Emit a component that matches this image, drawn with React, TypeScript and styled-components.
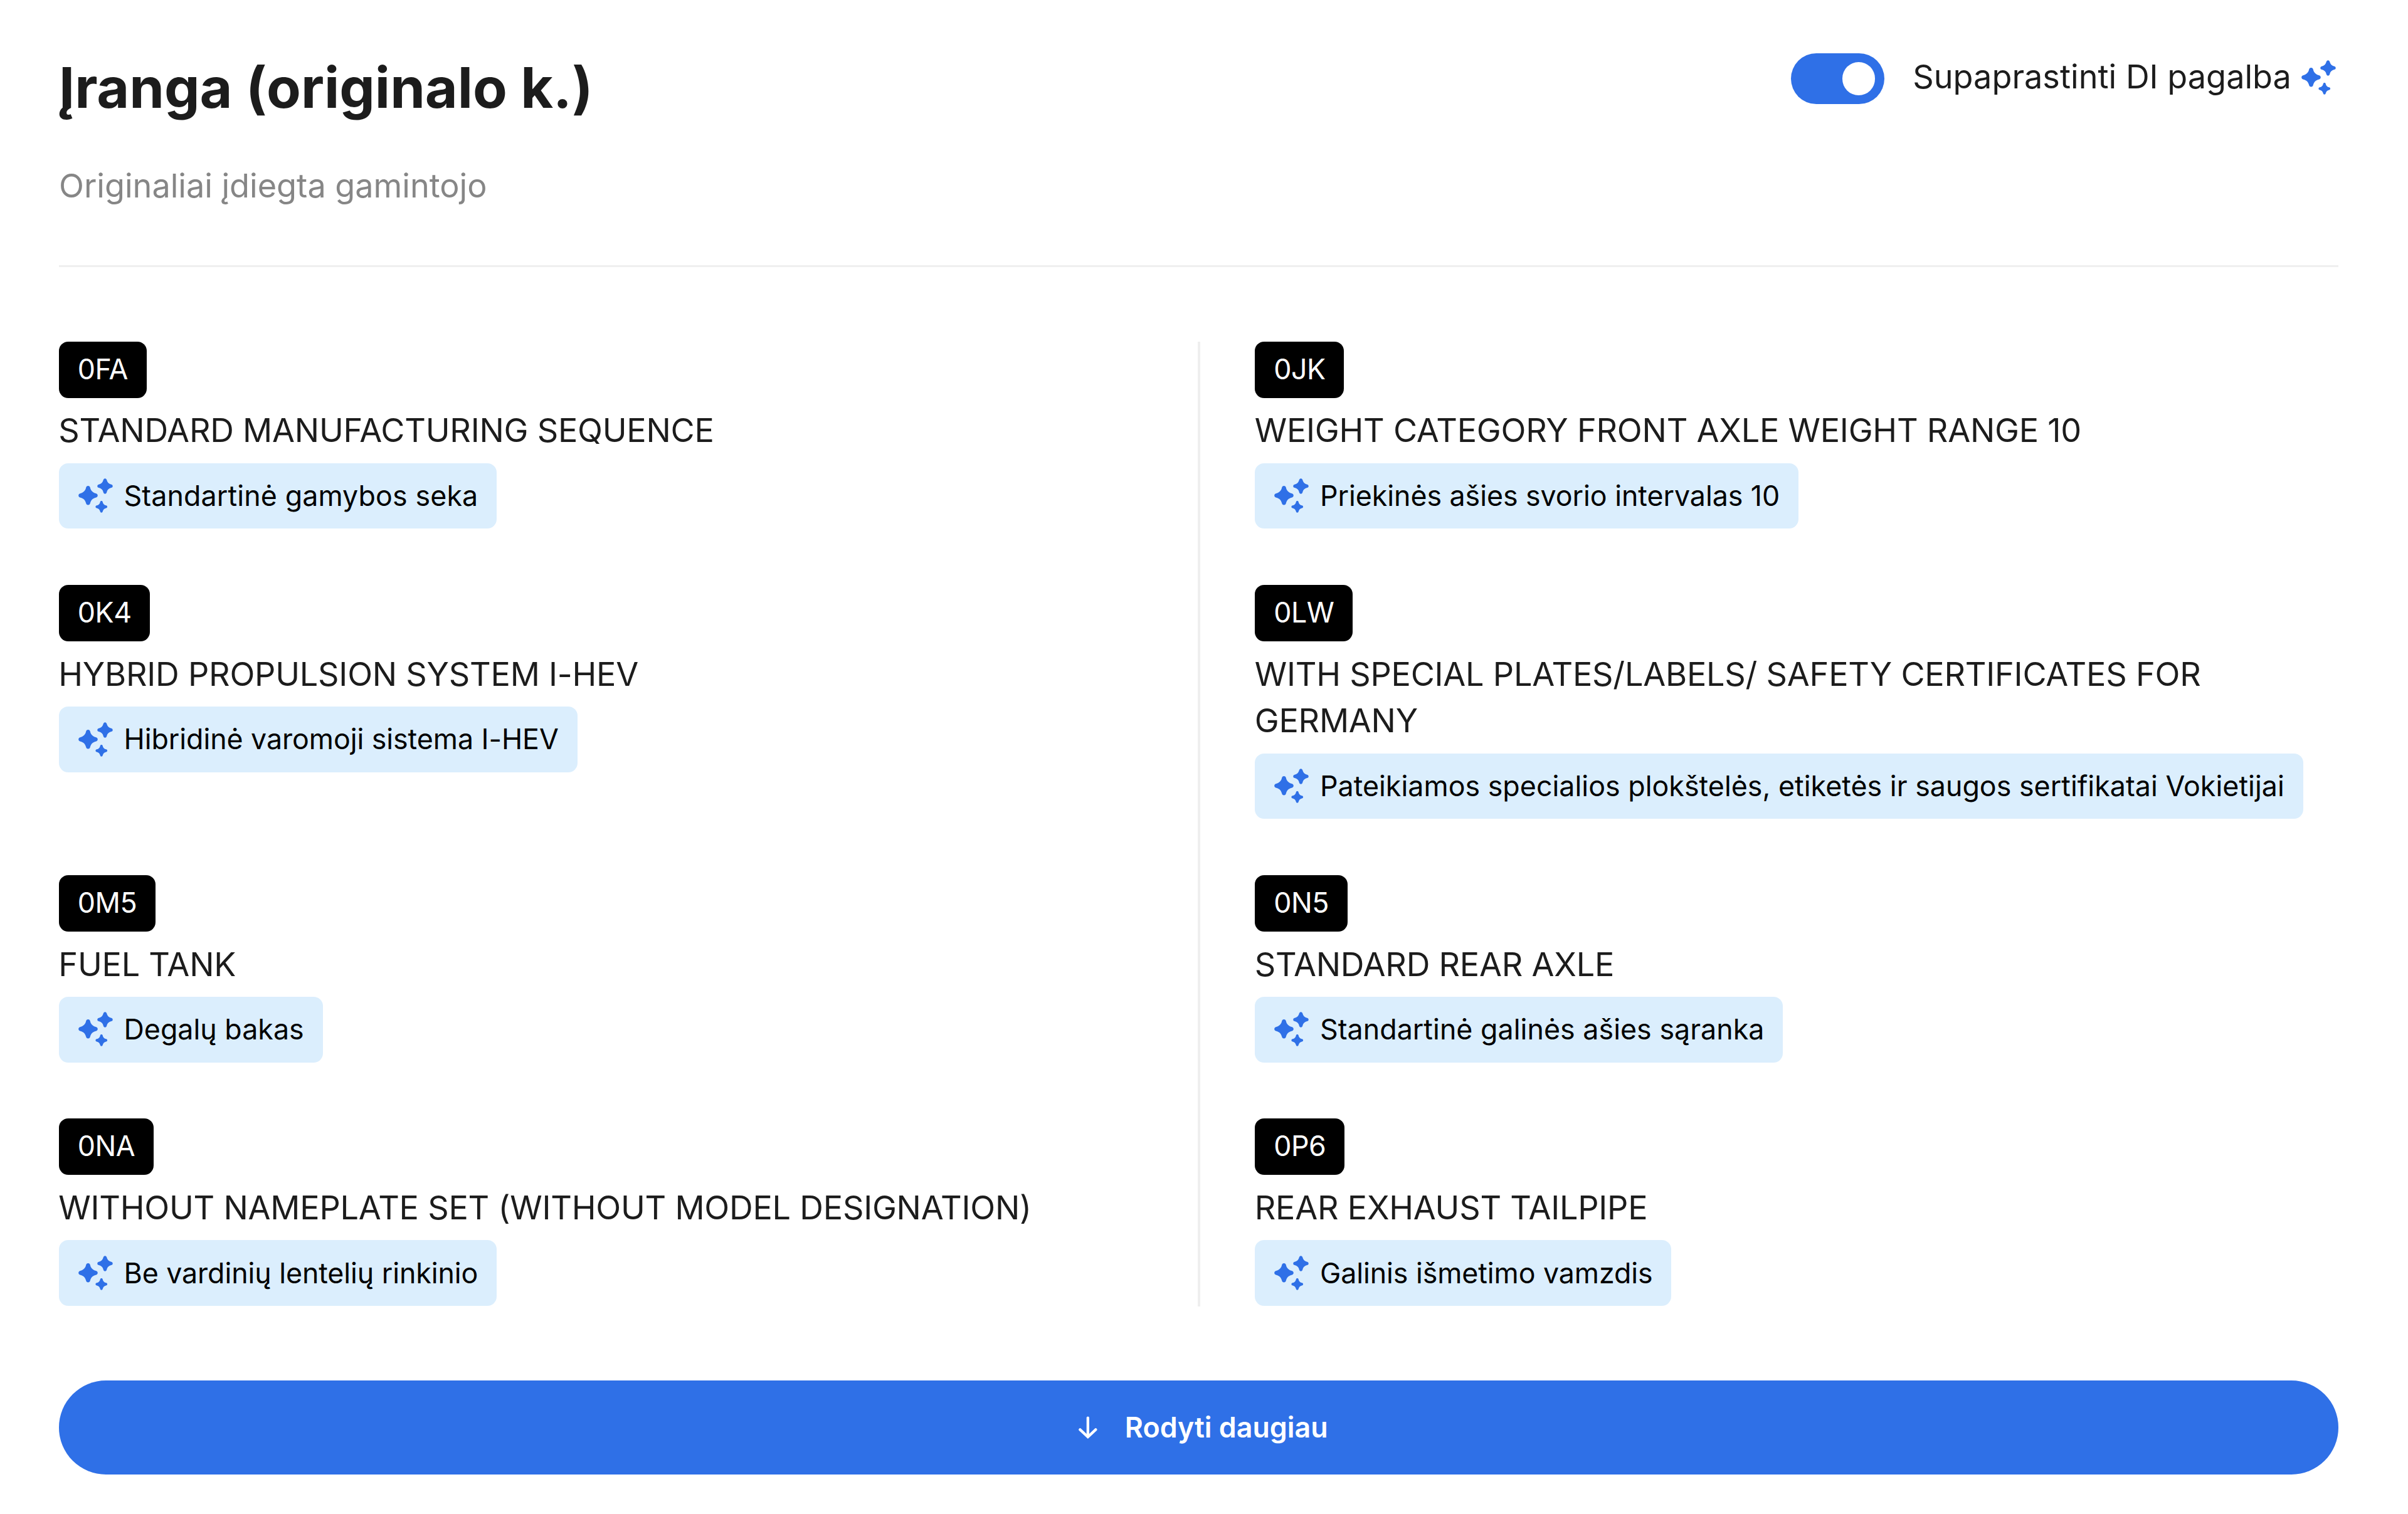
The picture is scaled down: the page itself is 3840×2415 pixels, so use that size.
import React, { useState } from 'react';
import styled, { createGlobalStyle } from 'styled-components';

/* One design unit in screen pixels. */
const UNIT = 3.7305;
const u = (n: number) => `${+(n * UNIT).toFixed(3)}px`;

const color = {
  blue: '#2f70e7',
  chip: '#dbeefd',
  text: '#1c1c1c',
  muted: '#868686',
  line: '#efefef',
};

const GlobalStyle = createGlobalStyle`
  * { box-sizing: border-box; }
  body {
    margin: 0;
    background: #fff;
    color: ${color.text};
    font-family: Inter, "Liberation Sans", sans-serif;
  }
`;

const Page = styled.main`
  width: 3840px;
  height: 2415px;
  padding: 80px 111px 0 94px;
  background: #fff;
`;

const Header = styled.header`
  display: flex;
  justify-content: space-between;
  align-items: flex-start;
  height: 345.7px;
  border-bottom: 3px solid ${color.line};
`;

const Heading = styled.div`
  display: flex;
  flex-direction: column;
  gap: 59.5px;
`;

const Title = styled.h2`
  margin: 0;
  font-size: ${u(24)};
  font-weight: 700;
  line-height: ${u(32)};
`;

const Subtitle = styled.p`
  margin: 0;
  color: ${color.muted};
  font-size: ${u(14)};
  letter-spacing: -0.03px;
  line-height: ${u(20)};
`;

const ToggleRow = styled.div`
  display: flex;
  align-items: flex-start;
  padding-top: 5px;
`;

const Switch = styled.button<{ $on: boolean }>`
  display: flex;
  align-items: center;
  justify-content: ${(p) => (p.$on ? 'flex-end' : 'flex-start')};
  width: ${u(40)};
  height: 81px;
  padding: 0 ${u(4)};
  border: 0;
  border-radius: ${u(11)};
  background: ${(p) => (p.$on ? color.blue : '#c4c4c4')};
`;

const Knob = styled.span`
  width: ${u(14)};
  height: ${u(14)};
  border-radius: 50%;
  background: #fff;
`;

const ToggleLabel = styled.span`
  margin-left: 45px;
  font-size: ${u(14)};
  line-height: 75px;
`;

const ToggleIcon = styled.span`
  display: flex;
  margin: 9px 0 0 15.4px;
`;

const Grid = styled.section`
  display: grid;
  grid-template-columns: 1fr 1fr;
  margin-top: 119.3px;
`;

const Cell = styled.article<{ $right: boolean; $last: boolean }>`
  display: flex;
  flex-direction: column;
  align-items: flex-start;
  gap: ${u(4)};
  padding: 0 0 ${(p) => (p.$last ? '0.8px' : '89.8px')} ${(p) => (p.$right ? '87.5px' : '0')};
  ${(p) => p.$right && `border-left: 4px solid ${color.line}; margin-left: -1.6px;`}
`;

const Code = styled.span`
  padding: 0 ${u(8)};
  border-radius: ${u(4)};
  background: #000;
  color: #fff;
  font-size: ${u(12)};
  letter-spacing: -0.5px;
  line-height: ${u(24)};
`;

const Name = styled.span`
  margin-left: -0.7px;
  font-size: ${u(14)};
  letter-spacing: -0.25px;
  line-height: ${u(20)};
`;

const Chip = styled.span<{ $tracking: number }>`
  display: flex;
  align-items: center;
  gap: 14px;
  height: ${u(28)};
  padding: 0 ${u(8)};
  border-radius: ${u(4)};
  background: ${color.chip};
  color: #000;
  font-size: ${u(12)};
  letter-spacing: ${(p) => p.$tracking}px;
  white-space: nowrap;
`;

const MoreButton = styled.button`
  display: flex;
  align-items: center;
  justify-content: center;
  gap: 28.8px;
  width: 100%;
  height: 149.5px;
  margin-top: 118.5px;
  border: 0;
  border-radius: 75px;
  background: ${color.blue};
  color: #fff;
  font-family: inherit;
  font-size: ${u(12)};
  font-weight: 600;
`;

const Icon = styled.svg`
  display: block;
  flex: none;
  width: ${u(16)};
  height: ${u(16)};
`;

const STAR =
  'M0-1C.12-1 .19-.93 .22-.8C.28-.5 .5-.28 .8-.22C.93-.19 1-.12 1 0C1 .12 .93 .19 .8 .22C.5 .28 .28 .5 .22 .8C.19 .93 .12 1 0 1C-.12 1-.19 .93-.22 .8C-.28 .5-.5 .28-.8 .22C-.93 .19-1 .12-1 0C-1-.12-.93-.19-.8-.22C-.5-.28-.28-.5-.22-.8C-.19-.93-.12-1 0-1Z';

const Sparkles = () => (
  <Icon viewBox="0 0 16 16" fill={color.blue} aria-hidden="true">
    <path d={STAR} transform="translate(4.42 7.86) scale(4.1)" />
    <path d={STAR} transform="translate(11.66 3.86) scale(3.28)" />
    <path d={STAR} transform="translate(10.12 12.7) scale(2.5)" />
  </Icon>
);

const ArrowDown = () => (
  <Icon viewBox="0 0 16 16" fill="none" stroke="#fff" strokeWidth="1.15" aria-hidden="true">
    <path d="M8 3.9V11.9" strokeLinecap="round" />
    <path d="M4.65 8.95L8 12.1L11.35 8.95" strokeLinecap="round" />
  </Icon>
);

type Item = { code: string; name: string; simple: string; tracking: number };

const items: Item[] = [
  { code: '0FA', name: 'STANDARD MANUFACTURING SEQUENCE', simple: 'Standartinė gamybos seka', tracking: 0.11 },
  {
    code: '0JK',
    name: 'WEIGHT CATEGORY FRONT AXLE WEIGHT RANGE 10',
    simple: 'Priekinės ašies svorio intervalas 10',
    tracking: -0.06,
  },
  { code: '0K4', name: 'HYBRID PROPULSION SYSTEM I-HEV', simple: 'Hibridinė varomoji sistema I-HEV', tracking: -0.07 },
  {
    code: '0LW',
    name: 'WITH SPECIAL PLATES/LABELS/ SAFETY CERTIFICATES FOR GERMANY',
    simple: 'Pateikiamos specialios plokštelės, etiketės ir saugos sertifikatai Vokietijai',
    tracking: 0.015,
  },
  { code: '0M5', name: 'FUEL TANK', simple: 'Degalų bakas', tracking: 0 },
  { code: '0N5', name: 'STANDARD REAR AXLE', simple: 'Standartinė galinės ašies sąranka', tracking: 0.03 },
  {
    code: '0NA',
    name: 'WITHOUT NAMEPLATE SET (WITHOUT MODEL DESIGNATION)',
    simple: 'Be vardinių lentelių rinkinio',
    tracking: -0.09,
  },
  { code: '0P6', name: 'REAR EXHAUST TAILPIPE', simple: 'Galinis išmetimo vamzdis', tracking: -0.09 },
];

export default function App() {
  const [simplified, setSimplified] = useState(true);
  return (
    <Page>
      <GlobalStyle />
      <Header>
        <Heading>
          <Title>Įranga (originalo k.)</Title>
          <Subtitle>Originaliai įdiegta gamintojo</Subtitle>
        </Heading>
        <ToggleRow>
          <Switch
            $on={simplified}
            role="switch"
            aria-checked={simplified}
            onClick={() => setSimplified(!simplified)}
          >
            <Knob />
          </Switch>
          <ToggleLabel>Supaprastinti DI pagalba</ToggleLabel>
          <ToggleIcon>
            <Sparkles />
          </ToggleIcon>
        </ToggleRow>
      </Header>
      <Grid>
        {items.map((item, i) => (
          <Cell key={item.code} $right={i % 2 === 1} $last={i >= items.length - 2}>
            <Code>{item.code}</Code>
            <Name>{item.name}</Name>
            {simplified && (
              <Chip $tracking={item.tracking}>
                <Sparkles />
                {item.simple}
              </Chip>
            )}
          </Cell>
        ))}
      </Grid>
      <MoreButton>
        <ArrowDown />
        Rodyti daugiau
      </MoreButton>
    </Page>
  );
}
